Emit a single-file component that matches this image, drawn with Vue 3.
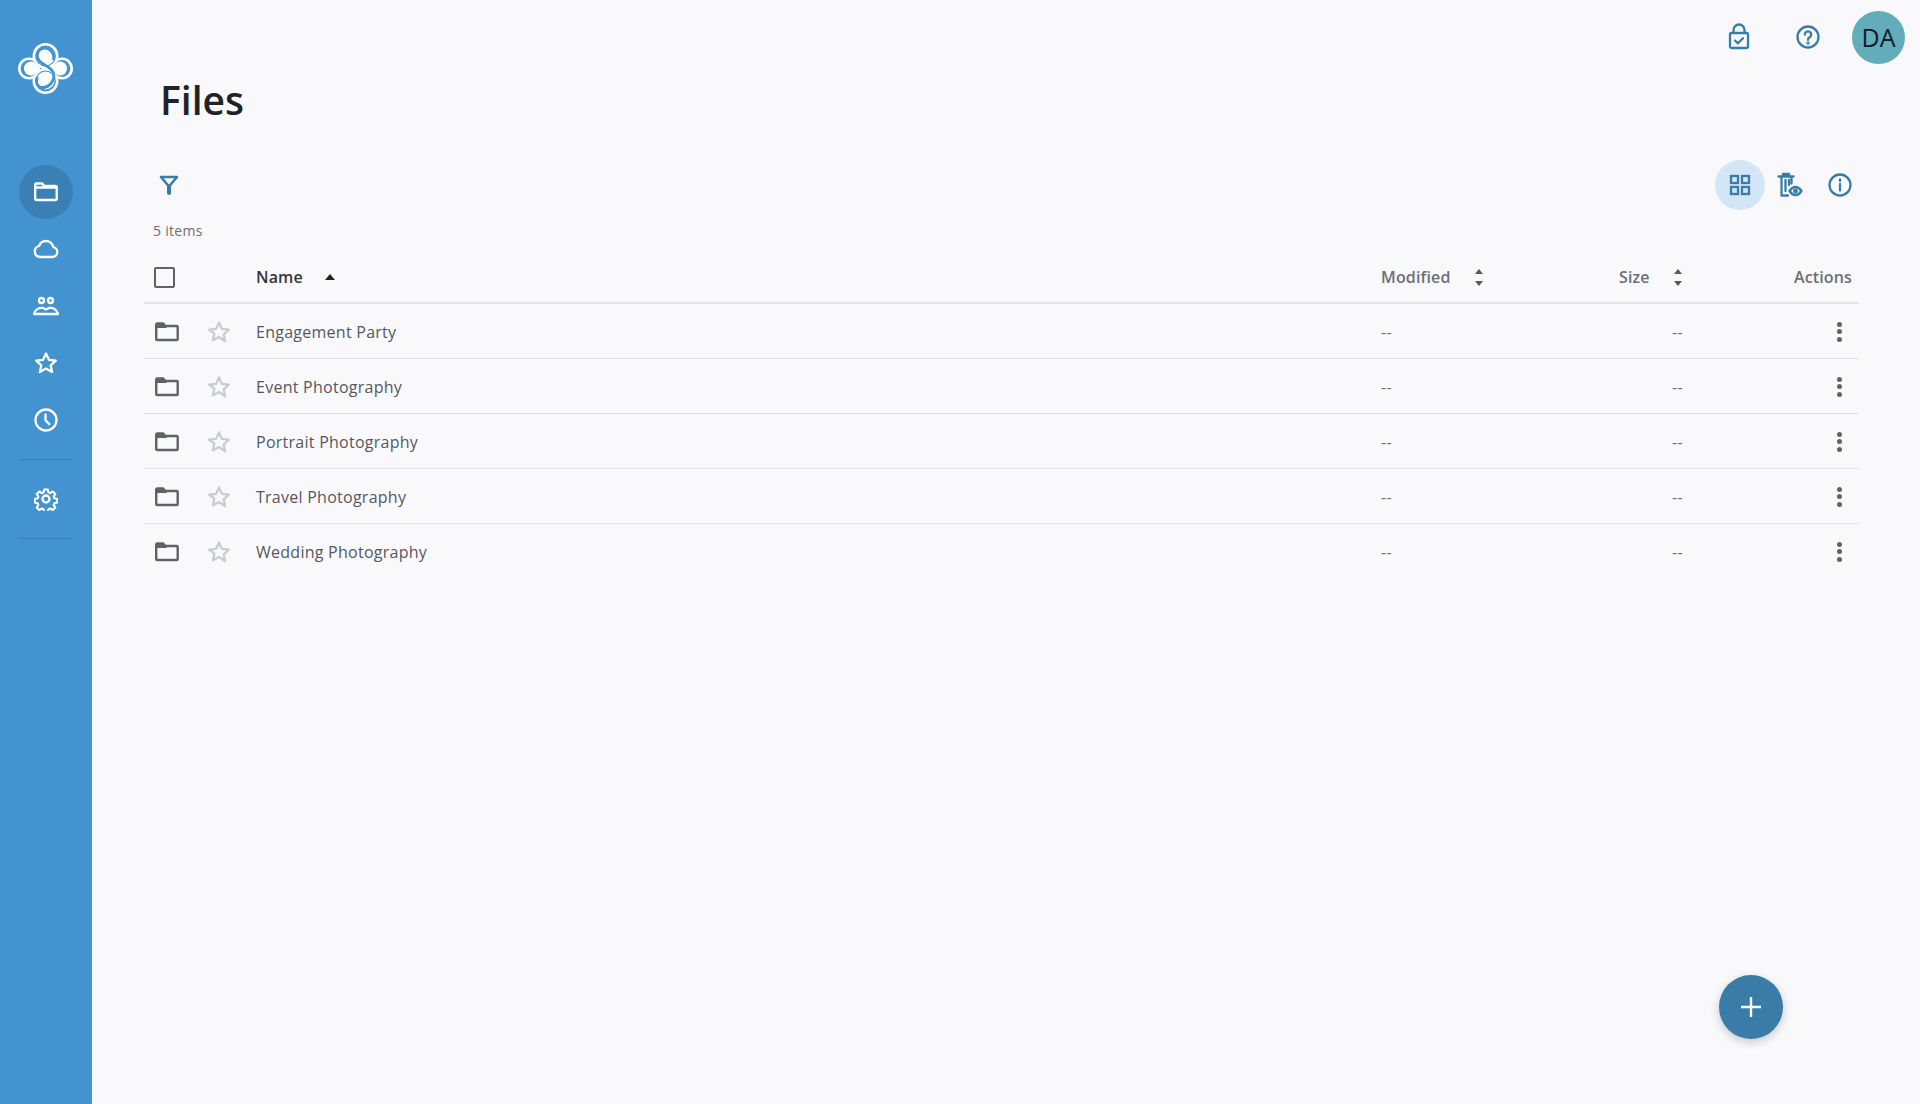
<template>
  <div class="app">
    <aside class="sidebar">
      <div class="logo">
        <svg width="55" height="51" viewBox="0 0 55 51">
          <g fill="#fff">
            <circle cx="27.5" cy="13" r="13" />
            <circle cx="27.5" cy="38" r="13" />
            <circle cx="11" cy="25.5" r="11" />
            <circle cx="44" cy="25.5" r="11" />
          </g>
          <g fill="#4393d0">
            <circle cx="27.5" cy="13" r="10.400" />
            <circle cx="27.5" cy="38" r="10.400" />
            <circle cx="11" cy="25.5" r="8.400" />
            <circle cx="44" cy="25.5" r="8.400" />
          </g>
          <g fill="#fff">
            <circle cx="27.5" cy="13.500" r="9" />
            <circle cx="27.5" cy="37.500" r="9" />
            <circle cx="13" cy="25.5" r="7" />
            <circle cx="42" cy="25.5" r="7" />
          </g>
          <path d="M35.500 17C37 9 30 4 25 5.500C19 7 17.500 14 22 18.500C26 22.500 33 24 35.500 30C37.500 38 30 46.500 22 44C18.500 42.500 17.500 38 19.500 34" fill="none" stroke="#4393d0" stroke-width="2.800" />
        </svg>
      </div>
      <nav class="nav">
        <a class="nav-item active">
          <svg width="24" height="20" viewBox="0 0 24 20" class="side-icon"><path d="M1.200 17V2.500a1 1 0 0 1 1-1h6l2 2.500h11.500a1 1 0 0 1 1 1V17a1 1 0 0 1-1 1H2.200a1 1 0 0 1-1-1z" /><path d="M1.200 5.500h21.500" /></svg>
        </a>
        <a class="nav-item">
          <svg width="26" height="24" viewBox="0 0 26 24" class="side-icon"><path d="M7 20h12.500a5 5 0 0 0 .8-9.900C19.500 6.500 16.500 4 13 4a7.500 7.500 0 0 0-7 5 5.600 5.600 0 0 0 1 11z" /></svg>
        </a>
        <a class="nav-item">
          <svg width="26" height="24" viewBox="0 0 26 24" class="side-icon">
            <circle cx="8.500" cy="6.500" r="2.500" /><circle cx="17.500" cy="6.500" r="2.500" />
            <path d="M1 20c.8-4.500 5-6.500 9-6l3 1.500 3-1.500c4-.5 8.200 1.500 9 6z" />
          </svg>
        </a>
        <a class="nav-item">
          <svg width="24" height="24" viewBox="0 0 24 24" class="side-icon"><path d="M12 2.500l2.900 6.300 6.900.8-5.100 4.700 1.400 6.800L12 17.600l-6.100 3.500 1.400-6.800-5.100-4.700 6.900-.8z" /></svg>
        </a>
        <a class="nav-item">
          <svg width="24" height="24" viewBox="0 0 24 24" class="side-icon"><circle cx="12" cy="12" r="10.500" /><path d="M11.500 6.500v5.800l3.800 3.800" /></svg>
        </a>
      </nav>
      <div class="divider"></div>
      <a class="nav-item">
        <svg width="24" height="24" viewBox="0 0 24 24" class="side-icon">
          <circle cx="12" cy="12" r="3.500" />
          <path d="M10 1.500h4l.7 3.200 1.900.8 2.800-1.800 2.800 2.800-1.800 2.800.8 1.900 3.200.7v4l-3.200.7-.8 1.900 1.800 2.800-2.800 2.800-2.800-1.800-1.900.8-.7 3.200h-4l-.7-3.200-1.900-.8-2.800 1.800-2.800-2.800 1.800-2.800-.8-1.900-3.200-.7v-4l3.200-.7.800-1.900-1.800-2.800 2.800-2.800 2.800 1.800 1.900-.8z" transform="translate(1.100 1.100) scale(.91)" />
        </svg>
      </a>
      <div class="divider"></div>
    </aside>

    <main class="main">
      <header class="topbar">
        <svg width="24" height="28" viewBox="0 0 24 28" class="blue-icon lock">
          <rect x="3" y="11" width="18" height="15" rx="1.500" />
          <path d="M6.500 11V8a5.500 5.500 0 0 1 11 0v3M8 18.500l3 2.800 5-5" />
        </svg>
        <svg width="24" height="24" viewBox="0 0 24 24" class="blue-icon help">
          <circle cx="12" cy="12" r="10.500" />
          <path d="M8.800 9.500a3.200 3.200 0 1 1 4.800 2.800c-1 .6-1.600 1.200-1.600 2.500" />
          <circle cx="12" cy="18" r=".6" />
        </svg>
        <div class="avatar">DA</div>
      </header>

      <h1 class="title">Files</h1>

      <div class="toolbar">
        <svg width="20" height="20" viewBox="0 0 20 20" class="filter">
          <path d="M2 2h16l-8 9.500z" />
          <path class="stem" d="M10 11.500V18" />
        </svg>
        <div class="view-tools">
          <div class="view-btn selected">
            <svg width="24" height="24" viewBox="0 0 24 24" class="blue-icon square">
              <rect x="3" y="3" width="7" height="7" /><rect x="14" y="3" width="7" height="7" />
              <rect x="3" y="14" width="7" height="7" /><rect x="14" y="14" width="7" height="7" />
            </svg>
          </div>
          <div class="view-btn">
            <svg width="26" height="26" viewBox="0 0 26 26" class="blue-icon">
              <path d="M1.500 4.500h15M6 4.500V2h6v2.500M11 23.500H4.500V4.500M14.500 4.500v7M8.500 8v11M12 8v5" />
              <path d="M12.500 19c2-3 4-4 6-4s4 1 6 4c-2 3-4 4-6 4s-4-1-6-4z" />
              <circle cx="18.500" cy="19" r="1.300" />
            </svg>
          </div>
          <div class="view-btn">
            <svg width="24" height="24" viewBox="0 0 24 24" class="blue-icon">
              <circle cx="12" cy="12" r="10.500" /><path d="M12 11v6.500M12 6.500v1.500" />
            </svg>
          </div>
        </div>
      </div>

      <div class="count">5 items</div>

      <div class="table">
        <div class="row head">
          <div class="cell-check"><span class="checkbox"></span></div>
          <div></div>
          <div class="th dark">Name<span class="caret up"></span></div>
          <div class="th">Modified<span class="sort"><span class="caret up small"></span><span class="caret down small"></span></span></div>
          <div class="th">Size<span class="sort"><span class="caret up small"></span><span class="caret down small"></span></span></div>
          <div class="th actions">Actions</div>
        </div>
        <div v-for="name in folders" :key="name" class="row">
          <div class="cell-check">
            <svg width="24" height="20" viewBox="0 0 24 20" class="folder">
              <path d="M1.200 17V2.500a1 1 0 0 1 1-1h6l2 2.500h11.500a1 1 0 0 1 1 1V17a1 1 0 0 1-1 1H2.200a1 1 0 0 1-1-1z" />
              <path class="tab" d="M1.200 5.500V2.500a1 1 0 0 1 1-1h6l3 4z" />
            </svg>
          </div>
          <div class="cell-star">
            <svg width="24" height="24" viewBox="0 0 24 24" class="star"><path d="M12 2.500l2.900 6.400 6.900.8-5.100 4.700 1.400 6.900L12 17l-6.100 3.300 1.400-6.900L2.200 9.700l6.900-.8z" /></svg>
          </div>
          <div class="name">{{ name }}</div>
          <div class="dash">--</div>
          <div class="dash size">--</div>
          <div class="kebab"><span></span><span></span><span></span></div>
        </div>
      </div>

      <button class="fab">
        <svg width="24" height="24" viewBox="0 0 24 24"><path d="M12 2v20M2 12h20" stroke="#fff" stroke-width="2.400" fill="none" /></svg>
      </button>
    </main>
  </div>
</template>

<script setup>
const folders = [
  'Engagement Party',
  'Event Photography',
  'Portrait Photography',
  'Travel Photography',
  'Wedding Photography'
]
</script>

<style>
body {
  background: #f9f9fc;
}
</style>

<style scoped>
.app {
  display: flex;
  height: 1104px;
  overflow: hidden;
  font-family: "Open Sans", sans-serif;
  background: #f9f9fc;
}

.sidebar {
  width: 92px;
  flex: none;
  box-sizing: border-box;
  padding-right: 1px;
  background: #4393d0;
  display: flex;
  flex-direction: column;
  align-items: center;
}

.logo {
  margin-top: 43px;
  height: 51px;
}

.nav {
  margin-top: 71px;
  display: flex;
  flex-direction: column;
  gap: 3px;
}

.nav-item {
  width: 54px;
  height: 54px;
  border-radius: 50%;
  display: flex;
  align-items: center;
  justify-content: center;
}

.nav-item.active {
  background: #3b80b5;
}

.side-icon {
  fill: none;
  stroke: #fff;
  stroke-width: 2.300;
  stroke-linejoin: round;
  stroke-linecap: round;
}

.divider {
  width: 54px;
  height: 1px;
  background: #3b80b5;
  margin: 12px 0;
}

.main {
  flex: 1;
  min-width: 0;
  display: flex;
  flex-direction: column;
  padding: 11px 15px 0 52px;
}

.topbar {
  height: 53px;
  display: flex;
  align-items: center;
  justify-content: flex-end;
}

.blue-icon {
  fill: none;
  stroke: #3a7ca8;
  stroke-width: 2.300;
  stroke-linejoin: round;
  stroke-linecap: round;
}

.blue-icon.square {
  stroke-linecap: butt;
  stroke-linejoin: miter;
}

.lock {
  margin-bottom: 4px;
}

.help {
  margin: 0 32px 2px 45px;
}

.avatar {
  width: 53px;
  height: 53px;
  box-sizing: border-box;
  padding-bottom: 2px;
  border-radius: 50%;
  background: #62adb9;
  color: #0f1c2c;
  font-size: 25px;
  display: flex;
  align-items: center;
  justify-content: center;
}

.title {
  margin: 10px 0 0 16px;
  font-size: 39px;
  line-height: 52px;
  font-weight: 600;
  color: #1f2228;
}

.toolbar {
  margin: 34px 40px 0 0;
  height: 50px;
  display: flex;
  align-items: center;
  justify-content: space-between;
  padding-left: 15px;
}

.filter {
  fill: none;
  stroke: #3a7ca8;
  stroke-width: 2.600;
  stroke-linejoin: round;
}

.filter .stem {
  stroke-width: 4;
  stroke-linecap: round;
}

.view-tools {
  display: flex;
}

.view-btn {
  width: 50px;
  height: 50px;
  border-radius: 50%;
  display: flex;
  align-items: center;
  justify-content: center;
}

.view-btn.selected {
  background: #d3e6f6;
}

.count {
  margin: 11px 0 0 9px;
  font-size: 14px;
  line-height: 20px;
  letter-spacing: 0.3px;
  color: #6b6f76;
}

.table {
  margin: 9px 46px 0 0;
}

.row {
  display: grid;
  grid-template-columns: 66px 46px 1125px 238px 120px 1fr;
  align-items: center;
  box-sizing: border-box;
  height: 55px;
  padding-top: 1px;
  border-bottom: 1px solid #dfe0e4;
  font-size: 16px;
  letter-spacing: 0.26px;
  color: #55585e;
}

.row:last-child {
  border-bottom-color: transparent;
}

.row.head {
  height: 54px;
  padding-top: 2px;
  border-bottom: 2px solid #e3e4e8;
}

.cell-check {
  display: flex;
  padding-left: 11px;
}

.checkbox {
  width: 21px;
  height: 21px;
  margin-left: -1px;
  border: 2px solid #5f6368;
  border-radius: 2px;
  box-sizing: border-box;
}

.folder {
  fill: none;
  stroke: #5f6368;
  stroke-width: 2.400;
  stroke-linejoin: round;
}

.folder .tab {
  fill: #5f6368;
  stroke-width: 1;
}

.cell-star {
  display: flex;
  margin-left: -3px;
}

.star {
  fill: none;
  stroke: #c9ccd1;
  stroke-width: 2.300;
  stroke-linejoin: round;
}

.th {
  display: flex;
  align-items: center;
  font-weight: 600;
  letter-spacing: 0.15px;
  color: #6b6f76;
}

.th.dark {
  color: #33363c;
}

.th.actions {
  justify-content: flex-end;
  padding-right: 7px;
}

.caret {
  display: block;
  width: 0;
  height: 0;
  border-left: 5.5px solid transparent;
  border-right: 5.5px solid transparent;
}

.caret.up {
  border-bottom: 6px solid #1f2228;
  margin-left: 22px;
}

.caret.small {
  margin-left: 0;
  border-left-width: 4.5px;
  border-right-width: 4.500px;
}

.caret.up.small {
  border-bottom: 5px solid #55585e;
}

.caret.down {
  border-top: 5px solid #55585e;
}

.sort {
  display: flex;
  flex-direction: column;
  gap: 7px;
  margin-left: 24px;
}

.dash {
  color: #6b6f76;
}

.dash.size {
  padding-left: 53px;
}

.kebab {
  display: flex;
  flex-direction: column;
  align-items: center;
  justify-self: end;
  gap: 2.500px;
  padding-right: 17px;
}

.kebab span {
  width: 5px;
  height: 5px;
  border-radius: 50%;
  background: #5f6368;
}

.fab {
  position: absolute;
  left: 1719px;
  top: 975px;
  width: 64px;
  height: 64px;
  border: none;
  border-radius: 50%;
  background: #3a7ca8;
  box-shadow: 0 3px 10px rgba(0, 0, 0, 0.2);
  display: flex;
  align-items: center;
  justify-content: center;
  padding: 0;
}
</style>
